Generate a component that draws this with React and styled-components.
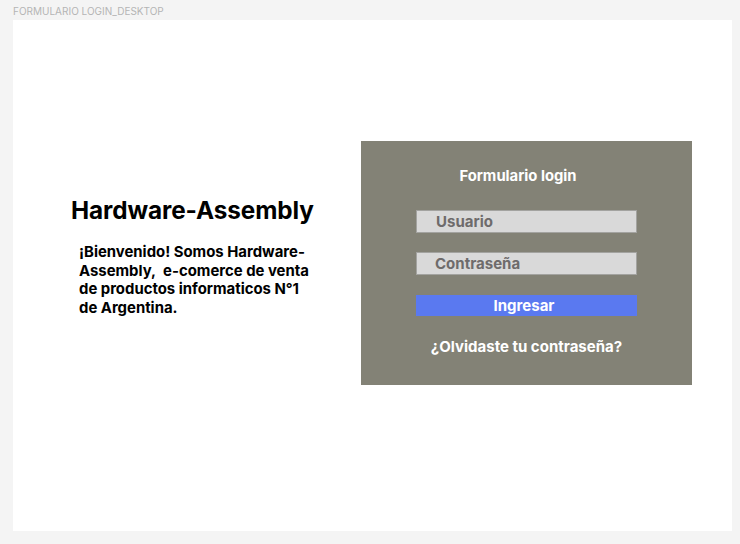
import React from 'react';
import styled, { createGlobalStyle } from 'styled-components';

const GlobalStyle = createGlobalStyle`
  html, body {
    margin: 0;
    padding: 0;
    background: #f4f4f4;
    font-family: Inter, "Liberation Sans", sans-serif;
  }
`;

const Page = styled.div`
  width: 740px;
  height: 544px;
  box-sizing: border-box;
  padding: 5px 8px 0 13px;
`;

const FrameLabel = styled.div`
  font-size: 10px;
  line-height: 13px;
  color: #b4b4b4;
  height: 15px;
`;

const Frame = styled.div`
  width: 719px;
  height: 511px;
  background: #fff;
  box-sizing: border-box;
  display: flex;
  align-items: flex-start;
  padding-top: 121px;
`;

const Intro = styled.div`
  width: 348px;
  box-sizing: border-box;
  padding: 55px 0 0 58px;
`;

const Brand = styled.h1`
  margin: 0;
  font-size: 24.3px;
  font-weight: 700;
  line-height: 28px;
  color: #000;
  letter-spacing: -0.1px;
`;

const Welcome = styled.p`
  margin: 19px 0 0 8px;
  width: 238px;
  font-size: 14.9px;
  font-weight: 700;
  line-height: 18.5px;
  color: #000;
`;

const LoginPanel = styled.form`
  width: 331px;
  height: 244px;
  background: #838276;
  box-sizing: border-box;
  display: flex;
  flex-direction: column;
  align-items: center;
  padding-top: 26px;
`;

const PanelTitle = styled.h2`
  margin: 0 17px 0 0;
  font-size: 14.8px;
  font-weight: 700;
  line-height: 18px;
  color: #fff;
`;

const Field = styled.div`
  width: 221px;
  height: 23px;
  box-sizing: border-box;
  background: #d9d9d9;
  border: 1px solid #a3a3a0;
  margin-top: ${(p) => p.gap}px;
  padding-left: ${(p) => p.indent}px;
  font-size: 15px;
  font-weight: 700;
  line-height: 21px;
  color: #6e6b6b;
`;

const SubmitButton = styled.button`
  width: 221px;
  height: 21px;
  margin-top: 20px;
  border: none;
  padding: 0;
  background: #5a79f0;
  color: #fff;
  font-family: inherit;
  font-size: 15px;
  font-weight: 700;
  line-height: 21px;
  text-indent: -5px;
`;

const Forgot = styled.a`
  margin-top: 21px;
  font-size: 15px;
  font-weight: 700;
  line-height: 20px;
  color: #fff;
  text-decoration: none;
`;

export default function App() {
  return (
    <>
      <GlobalStyle />
      <Page>
        <FrameLabel>FORMULARIO LOGIN_DESKTOP</FrameLabel>
        <Frame>
          <Intro>
            <Brand>Hardware-Assembly</Brand>
            <Welcome>
              ¡Bienvenido! Somos Hardware-Assembly,&nbsp; e-comerce de venta de productos informaticos N°1 de Argentina.
            </Welcome>
          </Intro>
          <LoginPanel onSubmit={(e) => e.preventDefault()}>
            <PanelTitle>Formulario login</PanelTitle>
            <Field gap={25} indent={19}>Usuario</Field>
            <Field gap={19} indent={18}>Contraseña</Field>
            <SubmitButton type="submit">Ingresar</SubmitButton>
            <Forgot href="#">¿Olvidaste tu contraseña?</Forgot>
          </LoginPanel>
        </Frame>
      </Page>
    </>
  );
}
